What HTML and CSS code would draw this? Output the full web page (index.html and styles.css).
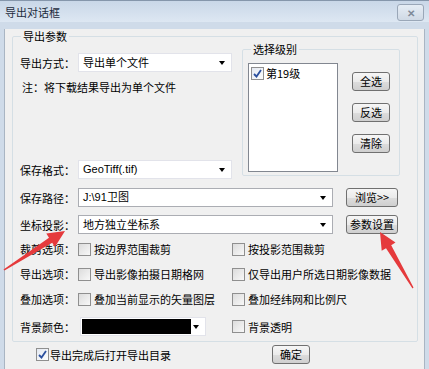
FILE: index.html
```html
<!DOCTYPE html>
<html lang="zh-CN">
<head>
    <meta charset="UTF-8">
    <title>导出对话框</title>
    <link rel="stylesheet" href="styles.css">
</head>
<body>

    <div class="window">
        <div class="titlebar">
            <span class="title">导出对话框</span>
            <span class="close">✕</span>
        </div>

        <div class="client">
            <fieldset class="group main">
                <legend>导出参数</legend>

                <div class="top">
                    <div class="left">
                        <div class="row first">
                            <span class="label">导出方式：</span>
                            <div class="combo short">导出单个文件</div>
                        </div>
                        <div class="note">注：将下载结果导出为单个文件</div>
                        <div class="row format">
                            <span class="label">保存格式：</span>
                            <div class="combo short latin">GeoTiff(.tif)</div>
                        </div>
                    </div>

                    <fieldset class="group levels">
                        <legend>选择级别</legend>
                        <div class="levels-body">
                            <div class="listbox">
                                <div class="item">
                                    <span class="check on"><svg viewBox="0 0 11 11" width="11" height="11"><path d="M2 6 L4.5 8.5 L9 2" fill="none" stroke="#2a4f9e" stroke-width="1.8"/></svg></span>
                                    <span>第19级</span>
                                </div>
                            </div>
                            <div class="side-buttons">
                                <button class="btn small">全选</button>
                                <button class="btn small">反选</button>
                                <button class="btn small">清除</button>
                            </div>
                        </div>
                    </fieldset>
                </div>

                <div class="row path">
                    <span class="label">保存路径：</span>
                    <div class="combo long latin">J:\91卫图</div>
                    <button class="btn wide">浏览&gt;&gt;</button>
                </div>
                <div class="row proj">
                    <span class="label">坐标投影：</span>
                    <div class="combo long">地方独立坐标系</div>
                    <button class="btn wide">参数设置</button>
                </div>

                <div class="opt-row first-opt">
                    <span class="label">裁剪选项：</span>
                    <label class="opt"><span class="check"></span>按边界范围裁剪</label>
                    <label class="opt"><span class="check"></span>按投影范围裁剪</label>
                </div>
                <div class="opt-row">
                    <span class="label">导出选项：</span>
                    <label class="opt"><span class="check"></span>导出影像拍摄日期格网</label>
                    <label class="opt"><span class="check"></span>仅导出用户所选日期影像数据</label>
                </div>
                <div class="opt-row">
                    <span class="label">叠加选项：</span>
                    <label class="opt"><span class="check"></span>叠加当前显示的矢量图层</label>
                    <label class="opt"><span class="check"></span>叠加经纬网和比例尺</label>
                </div>
                <div class="row color">
                    <span class="label">背景颜色：</span>
                    <div class="combo colorbox"><span class="swatch"></span></div>
                    <label class="opt"><span class="check"></span>背景透明</label>
                </div>
            </fieldset>

            <div class="bottom">
                <label class="opt open-dir"><span class="check on"><svg viewBox="0 0 11 11" width="11" height="11"><path d="M2 6 L4.5 8.5 L9 2" fill="none" stroke="#2a4f9e" stroke-width="1.8"/></svg></span>导出完成后打开导出目录</label>
                <button class="btn small ok">确定</button>
            </div>
        </div>

        <svg class="arrows" width="429" height="369" viewBox="0 0 429 369">
            <polygon fill="#e53a3c" points="3.5,269.4 49,237.7 46.3,233.4 65,231 54.9,247 52.2,242.7 4.5,270.6"/>
            <polygon fill="#e53a3c" points="413.5,287.6 391.2,245.2 395.5,242.6 380,232 381.7,250.8 386,248.2 412.5,288.4"/>
        </svg>
    </div>

</body>
</html>
```

FILE: styles.css
```css
body {
    margin: 0;
    font-family: "Noto Sans CJK SC", "Liberation Sans", sans-serif;
    font-size: 11px;
    color: #000;
    background: #f0f0f0;
}
.window {
    position: relative;
    width: 429px;
    height: 369px;
    overflow: hidden;
    background: #cfdbe9;
}
.titlebar {
    height: 22px;
    display: flex;
    align-items: center;
    justify-content: space-between;
    padding: 0 5px;
    background: linear-gradient(#c9d7e8, #dde7f2);
    border-top: 1px solid #8596ab;
    box-sizing: border-box;
}
.title {
    color: #1e2c3e;
    line-height: 14px;
}
.close {
    width: 25px;
    height: 15px;
    margin-top: 2px;
    border: 1px solid #9aa7b8;
    border-radius: 3px;
    background: linear-gradient(#e6edf5, #cfd9e5);
    color: #7f8a99;
    font-size: 10px;
    line-height: 15px;
    text-align: center;
    font-weight: bold;
}
.client {
    margin: 0 4px;
    height: 347px;
    background: #f0f0f0;
    border-left: 1px solid #a9b5c3;
    border-right: 1px solid #a9b5c3;
    box-sizing: border-box;
}
.group {
    margin: 0;
    border: 1px solid #d5dfe5;
    border-radius: 2px;
    padding: 0;
}
.group legend {
    padding: 0 2px;
    line-height: 14px;
}
.main {
    margin: 7px 0 0 7px;
    width: 406px;
    height: 313px;
    box-sizing: border-box;
    padding: 0 0 0 7px;
}
.main > legend {
    margin-left: 1px;
}
.top {
    display: flex;
    height: 136px;
}
.left {
    width: 222px;
}
.row {
    display: flex;
    align-items: center;
    height: 19px;
}
.row.first {
    margin-top: 10px;
}
.note {
    margin-top: 8px;
    padding-left: 2px;
    line-height: 14px;
}
.row.format {
    margin-top: 66px;
}
.label {
    width: 58px;
    flex: none;
    line-height: 14px;
    white-space: nowrap;
}
.combo {
    position: relative;
    height: 19px;
    box-sizing: border-box;
    background: #fff;
    border: 1px solid #e2e3ea;
    padding: 0 14px 0 4px;
    line-height: 17px;
}
.combo::after {
    content: "";
    position: absolute;
    right: 6px;
    top: 7px;
    border-left: 3px solid transparent;
    border-right: 3px solid transparent;
    border-top: 4px solid #000;
}
.combo.short {
    width: 154px;
}
.combo.long {
    width: 255px;
    border-color: #abadb3;
}
.latin {
    font-family: "Liberation Sans", sans-serif;
}
.levels {
    margin-top: -1px;
    width: 158px;
    height: 134px;
    box-sizing: border-box;
    padding: 0 0 0 5px;
}
.levels > legend {
    margin-left: 3px;
}
.levels-body {
    display: flex;
    margin-top: 7px;
}
.listbox {
    width: 90px;
    height: 109px;
    box-sizing: border-box;
    background: #fff;
    border: 1px solid #828790;
    padding: 2px 2px;
}
.item {
    display: flex;
    align-items: center;
    gap: 2px;
    line-height: 14px;
}
.side-buttons {
    display: flex;
    flex-direction: column;
    gap: 12px;
    margin: 9px 0 0 14px;
}
.btn {
    font: inherit;
    height: 19px;
    padding: 0;
    border: 1px solid #707070;
    border-radius: 3px;
    background: linear-gradient(#f6f6f6 0%, #ebebeb 50%, #dddddd 51%, #cfcfcf 100%);
    color: #000;
    line-height: 17px;
}
.btn.small {
    width: 38px;
}
.btn.wide {
    width: 52px;
    margin-left: 13px;
}
.row.path {
    margin-top: 9px;
}
.row.proj {
    margin-top: 8px;
}
.opt-row {
    display: flex;
    align-items: center;
    height: 16px;
    margin-top: 9px;
}
.opt-row.first-opt {
    margin-top: 7px;
}
.opt {
    display: flex;
    align-items: center;
    gap: 3px;
    line-height: 14px;
    white-space: nowrap;
}
.opt-row .opt:first-of-type,
.row.color .colorbox {
    width: 154px;
}
.check {
    width: 13px;
    height: 13px;
    flex: none;
    box-sizing: border-box;
    border: 1px solid #8f8f8f;
    background: linear-gradient(135deg, #dcdcdc, #f8f8f8);
    display: flex;
    align-items: center;
    justify-content: center;
}
.check.on {
    background: linear-gradient(135deg, #e4e9f2, #fbfcfd);
}
.row.color {
    margin-top: 10px;
}
.row.color .label {
    width: 60px;
}
.colorbox {
    width: 126px !important;
    padding: 1px 14px 1px 1px;
    border-color: #e2e3ea;
    margin-right: 26px;
}
.swatch {
    display: block;
    height: 15px;
    background: #000;
}
.bottom {
    display: flex;
    align-items: center;
    height: 19px;
    margin-top: 3px;
    padding-left: 31px;
}
.open-dir {
    width: 236px;
    gap: 1px;
}
.arrows {
    position: absolute;
    left: 0;
    top: 0;
    pointer-events: none;
}
```
